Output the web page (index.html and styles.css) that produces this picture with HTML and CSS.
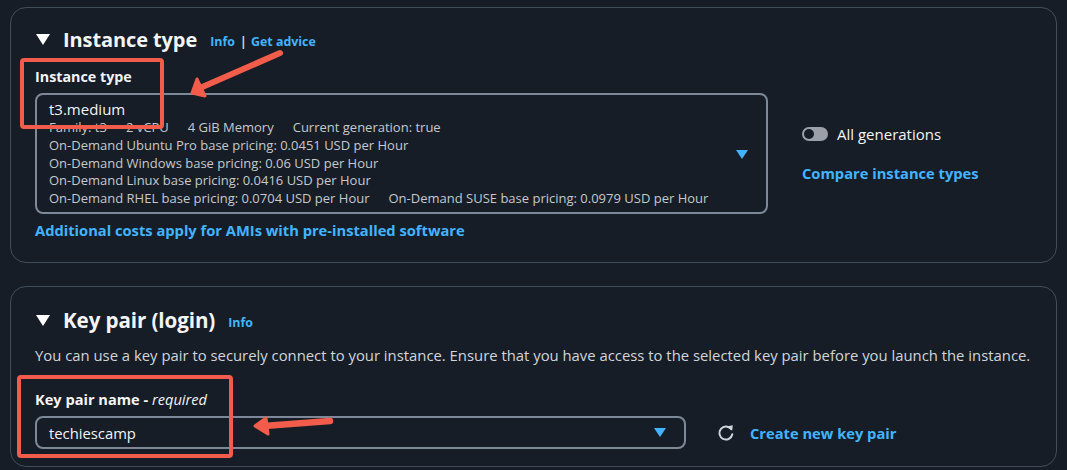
FILE: index.html
```html
<!DOCTYPE html>
<html>
<head>
<meta charset="utf-8">
<link rel="stylesheet" href="styles.css">
</head>
<body>
<div class="page">
  <section class="panel panel-instance">
    <h2 class="panel-title">
      <svg class="caret" width="14" height="12" viewBox="0 0 14 12"><polygon points="0,1 14,1 7,12" fill="#ffffff"/></svg>
      <span class="title-text">Instance type</span>
      <span class="info">Info</span><span class="sep">|</span><span class="info">Get advice</span>
    </h2>
    <div class="field-label">Instance type</div>
    <div class="instance-row">
      <div class="select select-big">
        <div class="select-body">
          <div class="select-value">t3.medium</div>
          <div class="detail-line"><span>Family: t3</span><span>2 vCPU</span><span>4 GiB Memory</span><span>Current generation: true</span></div>
          <div class="detail-line"><span>On-Demand Ubuntu Pro base pricing: 0.0451 USD per Hour</span></div>
          <div class="detail-line"><span>On-Demand Windows base pricing: 0.06 USD per Hour</span></div>
          <div class="detail-line"><span>On-Demand Linux base pricing: 0.0416 USD per Hour</span></div>
          <div class="detail-line"><span>On-Demand RHEL base pricing: 0.0704 USD per Hour</span><span>On-Demand SUSE base pricing: 0.0979 USD per Hour</span></div>
        </div>
        <svg class="dd" width="12" height="9" viewBox="0 0 12 9"><polygon points="0,0 12,0 6,9" fill="#42b4ff"/></svg>
      </div>
      <div class="side">
        <div class="toggle-row"><span class="toggle"><span class="knob"></span></span><span class="toggle-label">All generations</span></div>
        <div class="link">Compare instance types</div>
      </div>
    </div>
    <div class="link costs">Additional costs apply for AMIs with pre-installed software</div>
  </section>

  <section class="panel panel-key">
    <h2 class="panel-title">
      <svg class="caret" width="14" height="12" viewBox="0 0 14 12"><polygon points="0,1 14,1 7,12" fill="#ffffff"/></svg>
      <span class="title-text title-key">Key pair (login)</span>
      <span class="info info-key">Info</span>
    </h2>
    <p class="desc">You can use a key pair to securely connect to your instance. Ensure that you have access to the selected key pair before you launch the instance.</p>
    <div class="field-label label-key">Key pair name - <em>required</em></div>
    <div class="key-row">
      <div class="select select-small">
        <span class="select-value">techiescamp</span>
        <svg class="dd" width="12" height="9" viewBox="0 0 12 9"><polygon points="0,0 12,0 6,9" fill="#42b4ff"/></svg>
      </div>
      <svg class="refresh" width="18" height="18" viewBox="0 0 18 18"><path d="M14.2 5.2 A6.5 6.5 0 1 0 15.3 10.2" fill="none" stroke="#d1d5db" stroke-width="2" stroke-linecap="round"/><polygon points="10.5,2.2 15.8,1.2 15.2,6.6" fill="#d1d5db"/></svg>
      <span class="link">Create new key pair</span>
    </div>
  </section>

  <div class="mark mark-1"></div>
  <div class="mark mark-2"></div>
  <svg class="arrows" width="1067" height="470" viewBox="0 0 1067 470">
    <g fill="#f25c4a" stroke="#f25c4a" stroke-linecap="round" stroke-linejoin="round">
      <line x1="280" y1="53" x2="200" y2="88" stroke-width="6"/>
      <polygon points="192,93 197,79 205,96" stroke-width="3"/>
      <line x1="330" y1="421" x2="264" y2="426" stroke-width="6.5"/>
      <polygon points="255,426 266,418 268,434" stroke-width="3"/>
    </g>
  </svg>
</div>
</body>
</html>
```

FILE: styles.css
```css
* { box-sizing: border-box; }
html, body { margin: 0; padding: 0; }
body {
  background: #161d26;
  font-family: "Open Sans", "Noto Sans", sans-serif;
  color: #d1d5db;
  width: 1067px;
  height: 470px;
  overflow: hidden;
}
.page {
  position: relative;
  padding: 7px 10px 0 10px;
  height: 470px;
}
.panel {
  border: 1px solid #414d5c;
  border-radius: 16px;
  padding: 0 24px;
}
.panel-instance {
  padding-top: 19px;
  padding-bottom: 22px;
}
.panel-key {
  margin-top: 23px;
  padding-top: 21px;
  padding-bottom: 17px;
}
.panel-title {
  margin: 0;
  display: flex;
  align-items: center;
  height: 24px;
  font-weight: 700;
  font-size: 20px;
  color: #f3f4f5;
}
.caret { margin-left: 1px; margin-right: 13px; }
.title-text { letter-spacing: -0.1px; }
.title-key { font-size: 20.6px; }
.info {
  font-size: 12.4px;
  font-weight: 700;
  color: #42b4ff;
  margin-left: 13px;
  padding-top: 4px;
}
.sep {
  font-size: 13px;
  color: #d1d5db;
  margin-left: 5px;
  padding-top: 3px;
}
.sep + .info { margin-left: 4px; }
.info-key { margin-left: 13px; }
.field-label {
  margin-top: 16px;
  font-size: 14.3px;
  font-weight: 700;
  color: #f3f4f5;
  line-height: 20px;
}
.label-key { font-size: 14.6px; }
.field-label em { font-weight: 400; font-style: italic; }
.instance-row {
  display: flex;
  margin-top: 6px;
  gap: 34px;
}
.select {
  border: 2px solid #7d8998;
  border-radius: 8px;
  display: flex;
  align-items: center;
}
.select-big {
  width: 733px;
  height: 121px;
  padding: 4px 18px 0 12px;
}
.select-big .dd { margin-top: -3px; }
.select-body { flex: 1; align-self: flex-start; }
.select-value {
  font-size: 15px;
  line-height: 20px;
  color: #f3f4f5;
}
.select-small .select-value { font-size: 14.8px; }
.detail-line {
  display: flex;
  gap: 19px;
  font-size: 13px;
  line-height: 17.75px;
  color: #c6c9cd;
}
.side { padding-top: 30px; }
.toggle-row { display: flex; align-items: center; height: 22px; }
.toggle {
  position: relative;
  width: 26px;
  height: 14px;
  border-radius: 7px;
  background: #9ba0a8;
}
.knob {
  position: absolute;
  left: 2px;
  top: 2px;
  width: 10px;
  height: 10px;
  border-radius: 50%;
  background: #161d26;
}
.toggle-label {
  margin-left: 9px;
  font-size: 15px;
  color: #f3f4f5;
}
.link {
  font-size: 14.7px;
  font-weight: 700;
  color: #42b4ff;
  line-height: 20px;
}
.side .link { margin-top: 18px; }
.costs { margin-top: 6px; }
.desc {
  margin: 13px 0 0 0;
  font-size: 14.85px;
  line-height: 20px;
  color: #d1d5db;
}
.label-key { margin-top: 24px; }
.key-row {
  display: flex;
  align-items: center;
  margin-top: 7px;
}
.select-small {
  width: 651px;
  height: 33px;
  padding: 0 18px 0 12px;
  justify-content: space-between;
}
.refresh { margin-left: 31px; margin-right: 15px; }
.mark {
  position: absolute;
  border: 4px solid #f25c4a;
  border-radius: 4px;
}
.mark-1 { left: 20px; top: 58px; width: 144px; height: 71px; }
.mark-2 { left: 17px; top: 375px; width: 216px; height: 83px; }
.arrows { position: absolute; left: 0; top: 0; pointer-events: none; }
```
